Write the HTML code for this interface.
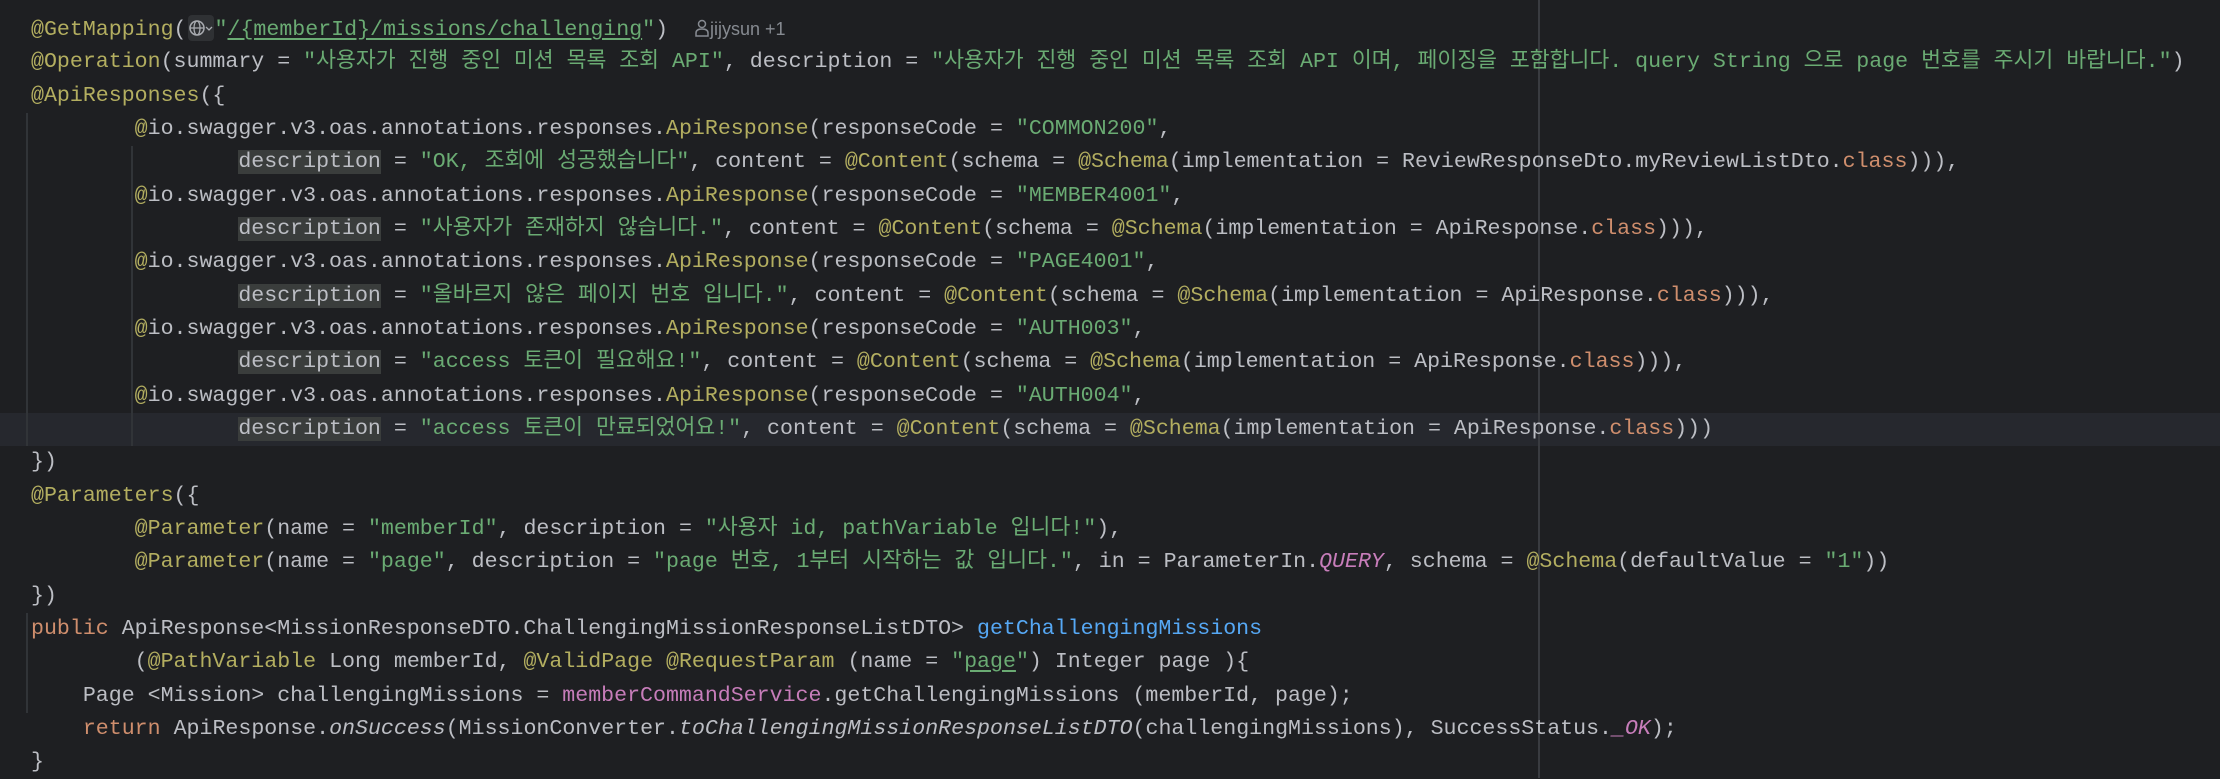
<!DOCTYPE html>
<html><head><meta charset="utf-8">
<style>
html,body{margin:0;padding:0;background:#1e1f22;}
body{width:2220px;height:778px;position:relative;overflow:hidden;font-family:"Liberation Mono","Noto Sans CJK KR",monospace;font-size:21.6px;color:#bcbec4;}
.l{position:absolute;left:31px;height:33px;line-height:33px;white-space:pre;}
.cur{position:absolute;left:0;width:2220px;top:413px;height:33px;background:#26282e;}
.g{position:absolute;width:2px;background:#313438;}
.rm{position:absolute;left:1538px;top:0;width:2px;height:778px;background:#393b40;}
.a{color:#b3ae60}.s{color:#6aab73}.k{color:#cf8e6d}.m{color:#56a8f5}.f{color:#c77dba}
.fi{color:#c77dba;font-style:italic}.i{font-style:italic}
.h{background:#3a3d3c}
.u{text-decoration:underline;text-underline-offset:3px}
.ico{display:inline-block;width:26px;height:26px;background:#2f3134;border-radius:4px;vertical-align:-6px;margin:0 1px;position:relative}
.hint{font-family:"Liberation Sans",sans-serif;font-size:18px;color:#868a91}
</style></head><body>
<div class="cur"></div>
<div class="rm"></div>
<div class="g" style="left:26px;top:113px;height:333px"></div>
<div class="g" style="left:131px;top:146px;height:300px"></div>
<div class="g" style="left:26px;top:613px;height:100px"></div>

<div class="l" style="top:13px"><span class="a">@GetMapping</span>(<span class="ico"><svg width="26" height="26" viewBox="0 0 26 26" style="position:absolute;left:0;top:0"><circle cx="9" cy="13" r="7" fill="none" stroke="#a8abb0" stroke-width="1.5"/><ellipse cx="9" cy="13" rx="3" ry="7" fill="none" stroke="#a8abb0" stroke-width="1.3"/><line x1="2" y1="13" x2="16" y2="13" stroke="#a8abb0" stroke-width="1.3"/><path d="M18 12 l3 3 l3 -3" fill="none" stroke="#a8abb0" stroke-width="1.3"/></svg></span><span class="s">"<span class="u">/{memberId}/missions/challenging</span>"</span>)  <span class="hint"><svg width="16" height="18" viewBox="0 0 16 18" style="vertical-align:-2px"><circle cx="8" cy="5" r="3.5" fill="none" stroke="#868a91" stroke-width="1.5"/><path d="M2 17 v-3 q0-4 6-4 q6 0 6 4 v3 z" fill="none" stroke="#868a91" stroke-width="1.5"/></svg>jijysun +1</span></div>
<div class="l" style="top:46px"><span class="a">@Operation</span>(summary = <span class="s">"사용자가 진행 중인 미션 목록 조회 API"</span>, description = <span class="s">"사용자가 진행 중인 미션 목록 조회 API 이며, 페이징을 포함합니다. query String 으로 page 번호를 주시기 바랍니다."</span>)</div>
<div class="l" style="top:80px"><span class="a">@ApiResponses</span>({</div>
<div class="l" style="top:113px">        <span class="a">@</span>io.swagger.v3.oas.annotations.responses.<span class="a">ApiResponse</span>(responseCode = <span class="s">"COMMON200"</span>,</div>
<div class="l" style="top:146px">                <span class="h">description</span> = <span class="s">"OK, 조회에 성공했습니다"</span>, content = <span class="a">@Content</span>(schema = <span class="a">@Schema</span>(implementation = ReviewResponseDto.myReviewListDto.<span class="k">class</span>))),</div>
<div class="l" style="top:180px">        <span class="a">@</span>io.swagger.v3.oas.annotations.responses.<span class="a">ApiResponse</span>(responseCode = <span class="s">"MEMBER4001"</span>,</div>
<div class="l" style="top:213px">                <span class="h">description</span> = <span class="s">"사용자가 존재하지 않습니다."</span>, content = <span class="a">@Content</span>(schema = <span class="a">@Schema</span>(implementation = ApiResponse.<span class="k">class</span>))),</div>
<div class="l" style="top:246px">        <span class="a">@</span>io.swagger.v3.oas.annotations.responses.<span class="a">ApiResponse</span>(responseCode = <span class="s">"PAGE4001"</span>,</div>
<div class="l" style="top:280px">                <span class="h">description</span> = <span class="s">"올바르지 않은 페이지 번호 입니다."</span>, content = <span class="a">@Content</span>(schema = <span class="a">@Schema</span>(implementation = ApiResponse.<span class="k">class</span>))),</div>
<div class="l" style="top:313px">        <span class="a">@</span>io.swagger.v3.oas.annotations.responses.<span class="a">ApiResponse</span>(responseCode = <span class="s">"AUTH003"</span>,</div>
<div class="l" style="top:346px">                <span class="h">description</span> = <span class="s">"access 토큰이 필요해요!"</span>, content = <span class="a">@Content</span>(schema = <span class="a">@Schema</span>(implementation = ApiResponse.<span class="k">class</span>))),</div>
<div class="l" style="top:380px">        <span class="a">@</span>io.swagger.v3.oas.annotations.responses.<span class="a">ApiResponse</span>(responseCode = <span class="s">"AUTH004"</span>,</div>
<div class="l" style="top:413px">                <span class="h">description</span> = <span class="s">"access 토큰이 만료되었어요!"</span>, content = <span class="a">@Content</span>(schema = <span class="a">@Schema</span>(implementation = ApiResponse.<span class="k">class</span>)))</div>
<div class="l" style="top:446px">})</div>
<div class="l" style="top:480px"><span class="a">@Parameters</span>({</div>
<div class="l" style="top:513px">        <span class="a">@Parameter</span>(name = <span class="s">"memberId"</span>, description = <span class="s">"사용자 id, pathVariable 입니다!"</span>),</div>
<div class="l" style="top:546px">        <span class="a">@Parameter</span>(name = <span class="s">"page"</span>, description = <span class="s">"page 번호, 1부터 시작하는 값 입니다."</span>, in = ParameterIn.<span class="fi">QUERY</span>, schema = <span class="a">@Schema</span>(defaultValue = <span class="s">"1"</span>))</div>
<div class="l" style="top:580px">})</div>
<div class="l" style="top:613px"><span class="k">public</span> ApiResponse&lt;MissionResponseDTO.ChallengingMissionResponseListDTO&gt; <span class="m">getChallengingMissions</span></div>
<div class="l" style="top:646px">        (<span class="a">@PathVariable</span> Long memberId, <span class="a">@ValidPage</span> <span class="a">@RequestParam</span> (name = <span class="s">"<span class="u">page</span>"</span>) Integer page ){</div>
<div class="l" style="top:680px">    Page &lt;Mission&gt; challengingMissions = <span class="f">memberCommandService</span>.getChallengingMissions (memberId, page);</div>
<div class="l" style="top:713px">    <span class="k">return</span> ApiResponse.<span class="i">onSuccess</span>(MissionConverter.<span class="i">toChallengingMissionResponseListDTO</span>(challengingMissions), SuccessStatus.<span class="fi">_OK</span>);</div>
<div class="l" style="top:746px">}</div>
</body></html>
